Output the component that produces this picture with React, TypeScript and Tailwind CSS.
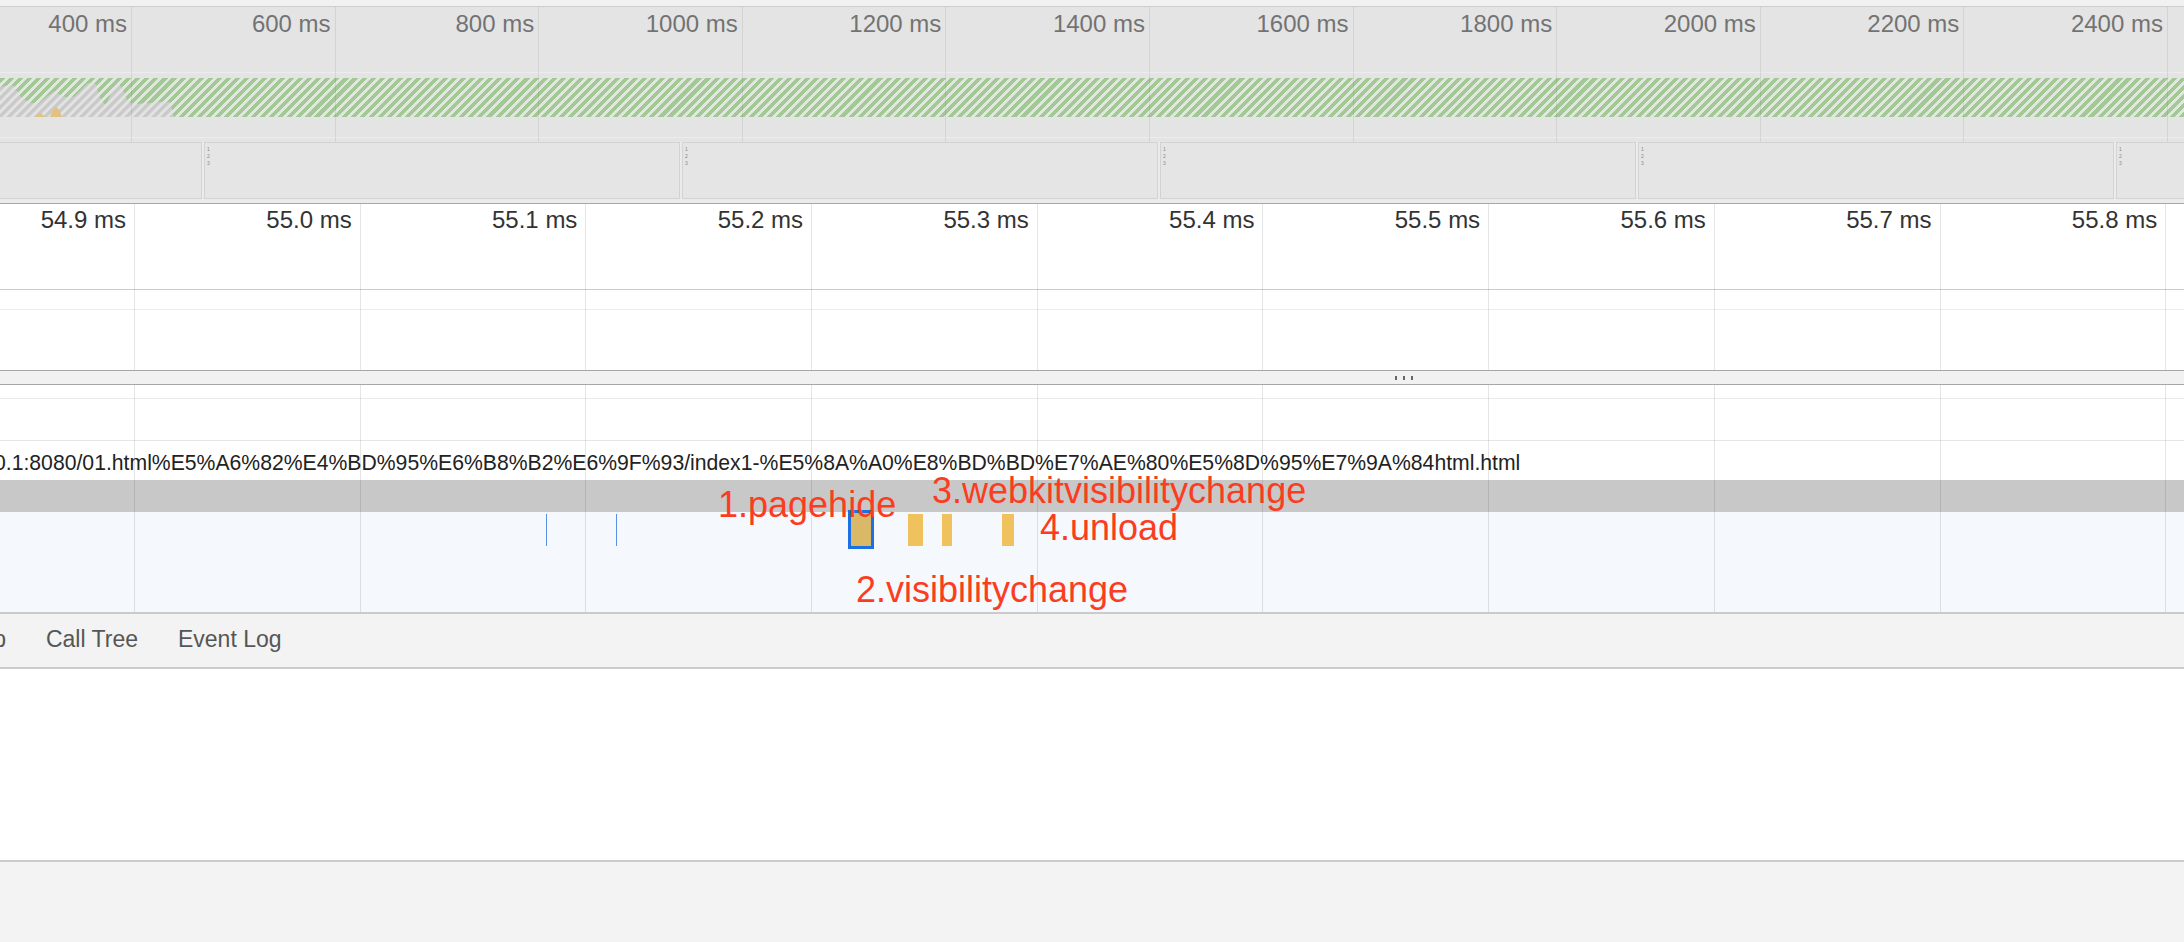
import React from "react";

const overviewLabels = ["400 ms", "600 ms", "800 ms", "1000 ms", "1200 ms", "1400 ms", "1600 ms", "1800 ms", "2000 ms", "2200 ms", "2400 ms"];
const mainLabels = ["54.9 ms", "55.0 ms", "55.1 ms", "55.2 ms", "55.3 ms", "55.4 ms", "55.5 ms", "55.6 ms", "55.7 ms", "55.8 ms"];

const url =
  "0.1:8080/01.html%E5%A6%82%E4%BD%95%E6%B8%B2%E6%9F%93/index1-%E5%8A%A0%E8%BD%BD%E7%AE%80%E5%8D%95%E7%9A%84html.html";

// vertical grid lines laid over a panel
function GridLines({ first, step, count, line }: { first: string; step: string; count: number; line: string }) {
  return (
    <div className="pointer-events-none absolute inset-0 flex">
      <div className={`${first} shrink-0 border-r ${line}`} />
      {Array.from({ length: count }).map((_, i) => (
        <div key={i} className={`${step} shrink-0 border-r ${line}`} />
      ))}
    </div>
  );
}

function Labels({ first, step, labels, cell }: { first: string; step: string; labels: string[]; cell: string }) {
  return (
    <div className="flex">
      {labels.map((l, i) => (
        <div key={l} className={`${i === 0 ? first : step} shrink-0 text-right whitespace-nowrap ${cell}`}>
          {l}
        </div>
      ))}
    </div>
  );
}

function CpuChart() {
  return (
    <svg className="absolute left-0 top-0" width="180" height="39" viewBox="0 0 180 39">
      <defs>
        <pattern id="gray-hatch" width="6.4" height="6.4" patternUnits="userSpaceOnUse" patternTransform="rotate(45)">
          <rect width="6.4" height="6.4" fill="#e3e3e3" />
          <rect width="3.4" height="6.4" fill="#c9c9c9" />
        </pattern>
      </defs>
      <path
        d="M0 9 L10 7 L14 8 L20 18 L28 24 L38 26 L45 20 L55 13 L60 17 L68 20 L75 18 L88 5 L96 6 L100 20 L106 28 L112 12 L118 4 L124 14 L128 24 L136 26 L150 25 L160 24 L170 24 L174 39 L0 39 Z"
        fill="url(#gray-hatch)"
      />
      <path d="M35 39 Q40 32 45 39 Z" fill="#e2c27e" />
      <path d="M50 39 Q53 30 56 29 Q59 30 62 39 Z" fill="#e2c27e" />
    </svg>
  );
}

function Frame({ width, digits = true }: { width: string; digits?: boolean }) {
  return (
    <div className={`${width} h-[57px] shrink-0 border border-[#d3d3d3] bg-[#e5e5e5] pl-[2px] pt-[3px]`}>
      {digits && (
        <div className="flex flex-col text-[5px] leading-[7px] text-[#8a8a8a]">
          <span>1</span>
          <span>2</span>
          <span>3</span>
        </div>
      )}
    </div>
  );
}

export default function App() {
  return (
    <div className="relative flex h-[942px] w-full flex-col overflow-hidden bg-[#f3f3f3] font-['Liberation_Sans',Arial,sans-serif]">
      {/* top strip */}
      <div className="h-[7px] shrink-0 border-b border-[#cdcdcd] bg-[#f1f1f1]" />

      {/* overview */}
      <div className="relative h-[135px] shrink-0 bg-[#e4e4e4]">
        <div className="h-[65px]">
          <Labels
            first="w-[132px]"
            step="w-[203.6px]"
            labels={overviewLabels}
            cell="pt-[5px] pr-[5px] text-[24px] leading-none text-[#737373]"
          />
        </div>
        <div className="h-px bg-[#ececec]" />
        <div className="h-[5px]" />
        <div className="relative h-[39px] bg-[repeating-linear-gradient(135deg,#a2c995_0_3.6px,#e1e6df_3.6px_6.4px)]">
          <CpuChart />
        </div>
        <div className="h-[20px]" />
        <div className="h-px bg-[#ececec]" />
        <GridLines first="w-[132px]" step="w-[203.6px]" count={10} line="border-black/[0.07]" />
      </div>

      {/* filmstrip */}
      <div className="flex h-[61px] shrink-0 gap-[2px] bg-[#ebebeb]">
        <div className="-ml-[2px] flex">
          <Frame width="w-[204px]" digits={false} />
        </div>
        <Frame width="w-[476px]" />
        <Frame width="w-[476px]" />
        <Frame width="w-[476px]" />
        <Frame width="w-[476px]" />
        <Frame width="w-[476px]" />
      </div>
      <div className="h-px shrink-0 bg-[#a8a8a8]" />

      {/* main ruler */}
      <div className="relative h-[166px] shrink-0 bg-white">
        <div className="h-[85px]">
          <Labels
            first="w-[135px]"
            step="w-[225.7px]"
            labels={mainLabels}
            cell="pt-[4px] pr-[9px] text-[24px] leading-none text-[#333]"
          />
        </div>
        <div className="h-px bg-[#cbcbcb]" />
        <div className="h-[19px]" />
        <div className="h-px bg-[#ececec]" />
        <GridLines first="w-[135px]" step="w-[225.7px]" count={10} line="border-black/[0.1]" />
      </div>

      {/* splitter */}
      <div className="flex h-[15px] shrink-0 items-center gap-[6px] border-y border-[#a6a6a6] bg-[#f1f1f1] pl-[1395px]">
        <span className="h-[4px] w-[2px] bg-[#666]" />
        <span className="h-[4px] w-[2px] bg-[#666]" />
        <span className="h-[4px] w-[2px] bg-[#666]" />
      </div>

      {/* tracks */}
      <div className="relative h-[227px] shrink-0 bg-white">
        <div className="h-[13px]" />
        <div className="h-px bg-[#e9e9e9]" />
        <div className="h-[41px]" />
        <div className="h-px bg-[#e6e6e6]" />
        <div className="h-[39px] overflow-hidden">
          <div className="-ml-[6px] whitespace-nowrap pt-[11px] text-[21.2px] leading-none text-[#222]">{url}</div>
        </div>
        <div className="h-[32px] bg-[#c8c8c8]" />
        <div className="h-[100px] bg-[#f5f8fc]" />
        <GridLines first="w-[135px]" step="w-[225.7px]" count={10} line="border-black/[0.1]" />

        {/* event marks */}
        <div className="absolute left-[546px] top-[129px] h-[32px] w-px bg-[#5b8fe6]" />
        <div className="absolute left-[616px] top-[129px] h-[32px] w-px bg-[#5b8fe6]" />
        <div className="absolute left-[848px] top-[125px] h-[39px] w-[26px] border-[3px] border-[#1a70e4] bg-[#d9b968]" />
        <div className="absolute left-[908px] top-[129px] h-[32px] w-[15px] bg-[#f0c25e]" />
        <div className="absolute left-[942px] top-[129px] h-[32px] w-[10px] bg-[#f0c25e]" />
        <div className="absolute left-[1002px] top-[129px] h-[32px] w-[12px] bg-[#f0c25e]" />

        {/* annotations */}
        <div className="absolute left-[718px] top-[101.5px] whitespace-nowrap text-[36px] leading-none text-[#fb3d1f]">1.pagehide</div>
        <div className="absolute left-[932px] top-[87.5px] whitespace-nowrap text-[36px] leading-none text-[#fb3d1f]">3.webkitvisibilitychange</div>
        <div className="absolute left-[1040px] top-[124.5px] whitespace-nowrap text-[36px] leading-none text-[#fb3d1f]">4.unload</div>
        <div className="absolute left-[856px] top-[186.5px] whitespace-nowrap text-[36px] leading-none text-[#fb3d1f]">2.visibilitychange</div>
      </div>

      {/* tabs */}
      <div className="flex h-[57px] shrink-0 gap-[40px] border-y-2 border-[#cbcbcb] bg-[#f3f3f3] pt-[14px] text-[23px] leading-none text-[#565656]">
        <span className="-ml-[104px] whitespace-nowrap">Bottom-Up</span>
        <span className="whitespace-nowrap">Call Tree</span>
        <span className="whitespace-nowrap">Event Log</span>
      </div>

      {/* details */}
      <div className="h-[193px] shrink-0 border-b-2 border-[#cbcbcb] bg-white" />
      <div className="flex-1 bg-[#f3f3f3]" />
    </div>
  );
}
